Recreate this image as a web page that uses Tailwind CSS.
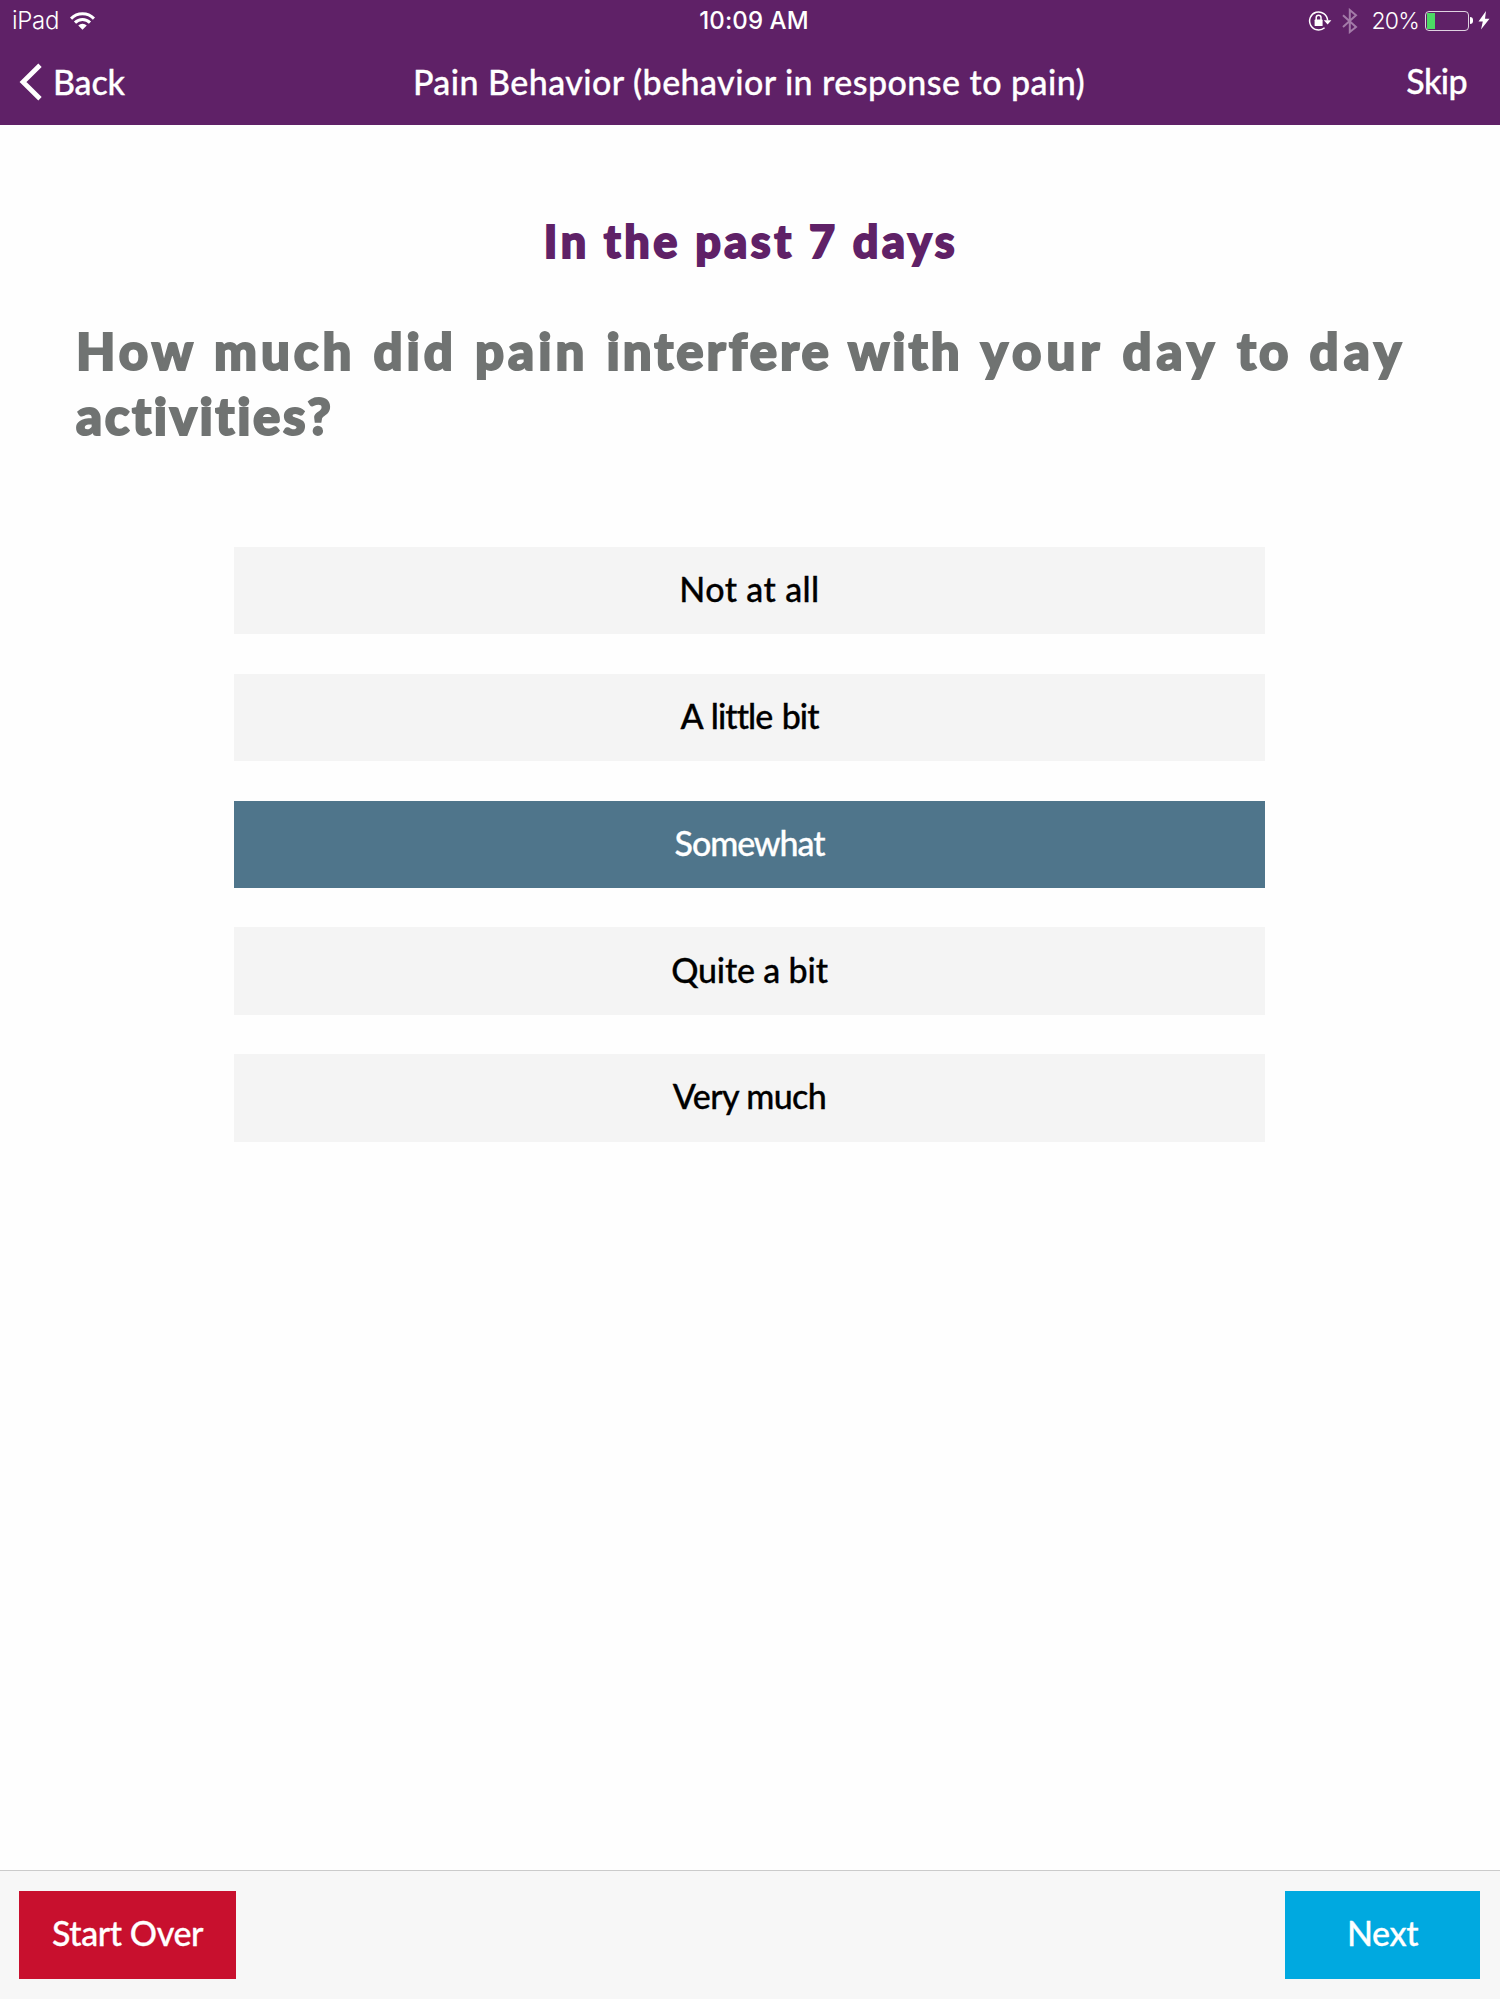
<!DOCTYPE html>
<html lang="en">
<head>
<meta charset="utf-8">
<title>Pain Behavior</title>
<script src="https://cdn.jsdelivr.net/npm/@tailwindcss/browser@4"></script>
</head>
<body class="bg-[#fefefe]">
<div class="flex h-[1999px] w-[1500px] flex-col overflow-hidden font-['Lato',sans-serif] text-[34px] font-medium">
  <header class="h-[125px] shrink-0 bg-[#5f2167] text-white">
    <!-- Status bar -->
    <div class="grid h-[38px] grid-cols-[1fr_auto_1fr] items-center pt-[2px] pr-[10px] pl-[12px] font-['Inter',sans-serif] text-[24px] leading-[38px]">
      <div class="flex items-center gap-[11px] font-light">
        <span class="tracking-[-0.3px]">iPad</span>
        <svg class="mb-[1px] h-[18px] w-[25px]" viewBox="0 0 24 17" fill="none" stroke="white" stroke-width="2.9">
          <path d="M1 6.2a15.5 15.5 0 0 1 22 0"/>
          <path d="M4.8 10.1a10.2 10.2 0 0 1 14.4 0"/>
          <path d="M12 17 7.9 12.9a5.8 5.8 0 0 1 8.2 0Z" fill="white" stroke="none"/>
        </svg>
      </div>
      <div class="pl-[6px] font-medium tracking-[0.1px]">10:09 AM</div>
      <div class="flex items-center justify-end">
        <svg class="mr-[10px] mb-[1px] h-[22px] w-[24px]" viewBox="0 0 24 22" fill="none" stroke="white" stroke-width="1.5">
          <path d="M19.6 10.5a9 9 0 1 0-3 7.2"/>
          <path d="M15.8 10.2h7.6l-3.8 4.2Z" fill="white" stroke="none"/>
          <rect x="6.6" y="9.6" width="8" height="6.4" rx="0.6" fill="white" stroke="none"/>
          <path d="M8.2 10V7.6a2.4 2.4 0 0 1 4.8 0V10"/>
        </svg>
        <svg class="mr-[14px] h-[26px] w-[16px]" viewBox="0 0 16 26" fill="none" stroke="#a37ba8" stroke-width="2">
          <path d="M1 7.2 14 19 7.8 24V2L14 7.2 1 19"/>
        </svg>
        <span class="mr-[6px] text-[23px] font-light tracking-[-0.8px]">20%</span>
        <div class="mb-[1px] flex h-[20px] w-[44px] rounded-[4px] border-[1.5px] border-white/80 p-[1px]">
          <div class="w-[8px] bg-[#4cd964]"></div>
        </div>
        <div class="mb-[1px] ml-[1px] h-[7px] w-[3px] rounded-r-full bg-white"></div>
        <svg class="mb-[1px] ml-[5px] h-[19px] w-[12px]" viewBox="0 0 12 19" fill="white">
          <path d="M8 0 0.5 10.5h4.3L3 18.5 11.5 7.8H7Z"/>
        </svg>
      </div>
    </div>
    <!-- Navigation bar -->
    <nav class="grid h-[87px] grid-cols-[1fr_auto_1fr] items-center pr-[33px] pl-[19px]">
      <div class="flex items-center gap-[10px]">
        <svg class="h-[38px] w-[24px]" viewBox="0 0 24 38" fill="none" stroke="white" stroke-width="4.8">
          <path d="M21 2.2 4 19l17 16.8"/>
        </svg>
        <span class="tracking-[-0.2px] [-webkit-text-stroke:0.3px]">Back</span>
      </div>
      <h1 class="pl-[12px] tracking-[0.44px] [-webkit-text-stroke:0.3px]">Pain Behavior (behavior in response to pain)</h1>
      <span class="justify-self-end pb-[3px] tracking-[-0.6px] [-webkit-text-stroke:0.3px]">Skip</span>
    </nav>
  </header>

  <main class="flex grow flex-col pt-[86px]">
    <h2 class="pl-[2px] text-center text-[45px] leading-[60px] font-black tracking-[3.5px] text-[#5f2167] [-webkit-text-stroke:1.8px]">In the past 7 days</h2>
    <p class="mt-[47px] pl-[76px] text-[51px] leading-[65px] font-black tracking-[4px] whitespace-nowrap text-[#707372] [-webkit-text-stroke:2px] [word-spacing:1.9px]">How much did pain <span class="tracking-[3px]">interfere with</span> <span class="tracking-[5px]">your day</span> <span class="tracking-[3px]">to</span> <span class="tracking-[5px]">day</span><br><span class="tracking-[2.6px]">activities?</span></p>
    <div class="mt-[99px] ml-[234px] flex w-[1031px] flex-col gap-[39.4px] text-black [-webkit-text-stroke:0.3px]">
      <button class="h-[87.4px] bg-[#f4f4f4] pb-[4px] tracking-[0.4px]">Not at all</button>
      <button class="h-[87.4px] bg-[#f4f4f4] pb-[4px] tracking-[-0.9px] [word-spacing:1.5px]">A little bit</button>
      <button class="h-[87.4px] bg-[#4f758b] pb-[4px] tracking-[-1.1px] text-white">Somewhat</button>
      <button class="h-[87.4px] bg-[#f4f4f4] pb-[4px] tracking-[-0.15px]">Quite a bit</button>
      <button class="h-[87.4px] bg-[#f4f4f4] pb-[4px] tracking-[-0.6px]">Very much</button>
    </div>
  </main>

  <footer class="flex h-[129px] shrink-0 items-start justify-between border-t border-[#cbcbcb] bg-[#f7f7f7] pt-[20px] pr-[20px] pl-[19px] text-white [-webkit-text-stroke:0.3px]">
    <button class="h-[87.5px] w-[217px] bg-[#c8102e] pb-[5px] tracking-[-0.4px]">Start Over</button>
    <button class="h-[87.5px] w-[195px] bg-[#00a9e0] pb-[5px] tracking-[-0.4px]">Next</button>
  </footer>
</div>
</body>
</html>
